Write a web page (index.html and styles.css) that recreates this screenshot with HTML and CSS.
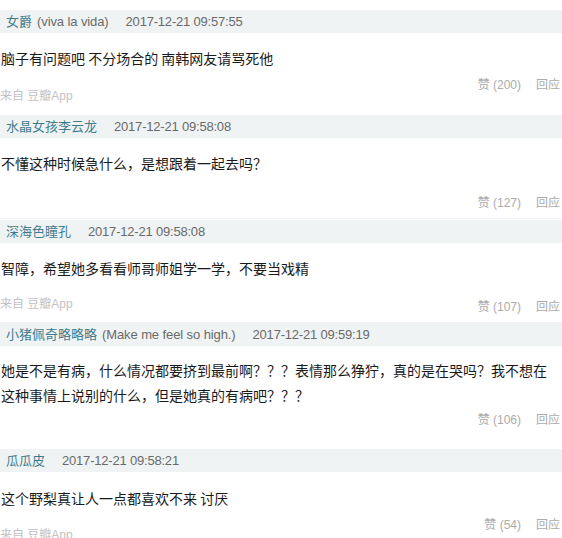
FILE: index.html
```html
<!DOCTYPE html>
<html lang="zh-CN">
<head>
<meta charset="utf-8">
<link rel="stylesheet" href="styles.css">
</head>
<body>
<div class="list">
  <div class="entry e1">
    <div class="hd"><span class="name">女爵</span><span class="alias">(viva la vida)</span><span class="date">2017-12-21 09:57:55</span></div>
    <div class="txt">脑子有问题吧 不分场合的 南韩网友请骂死他</div>
    <div class="ft"><span class="src">来自 豆瓣App</span><span class="acts">赞 (200)<span class="reply">回应</span></span></div>
  </div>
  <div class="entry e2">
    <div class="hd"><span class="name">水晶女孩李云龙</span><span class="date">2017-12-21 09:58:08</span></div>
    <div class="txt">不懂这种时候急什么，是想跟着一起去吗？</div>
    <div class="ft"><span class="acts">赞 (127)<span class="reply">回应</span></span></div>
  </div>
  <div class="entry e3">
    <div class="hd"><span class="name">深海色瞳孔</span><span class="date">2017-12-21 09:58:08</span></div>
    <div class="txt">智障，希望她多看看师哥师姐学一学，不要当戏精</div>
    <div class="ft"><span class="src">来自 豆瓣App</span><span class="acts">赞 (107)<span class="reply">回应</span></span></div>
  </div>
  <div class="entry e4">
    <div class="hd"><span class="name">小猪佩奇略略略</span><span class="alias">(Make me feel so high.)</span><span class="date">2017-12-21 09:59:19</span></div>
    <div class="txt">她是不是有病，什么情况都要挤到最前啊？？？表情那么狰狞，真的是在哭吗？我不想在这种事情上说别的什么，但是她真的有病吧？？？</div>
    <div class="ft"><span class="acts">赞 (106)<span class="reply">回应</span></span></div>
  </div>
  <div class="entry e5">
    <div class="hd"><span class="name">瓜瓜皮</span><span class="date">2017-12-21 09:58:21</span></div>
    <div class="txt">这个野梨真让人一点都喜欢不来 讨厌</div>
    <div class="ft"><span class="src">来自 豆瓣App</span><span class="acts">赞 (54)<span class="reply">回应</span></span></div>
  </div>
</div>
</body>
</html>
```

FILE: styles.css
```css
html, body {
  margin: 0;
  padding: 0;
  background: #ffffff;
}
body {
  width: 562px;
  height: 538px;
  overflow: hidden;
  font-family: "Liberation Sans", "Noto Sans CJK SC", sans-serif;
}
.list {
  display: flex;
  flex-direction: column;
}
.entry {
  display: flex;
  flex-direction: column;
}
.hd {
  height: 23px;
  line-height: 23px;
  background: #f0f3f3;
  padding-left: 6px;
  font-size: 13px;
  white-space: nowrap;
  display: flex;
}
.name {
  color: #3f7d8e;
}
.alias {
  color: #6a6a6a;
  margin-left: 5px;
  letter-spacing: -0.1px;
}
.date {
  color: #6a6a6a;
  margin-left: 17px;
  letter-spacing: -0.2px;
}
.txt {
  font-family: "Noto Sans CJK SC", sans-serif;
  font-size: 14px;
  line-height: 25px;
  color: #1a1a1a;
  padding-left: 1px;
  max-width: 550px;
  margin-top: 13px;
}
.ft {
  display: flex;
  align-items: flex-start;
  font-size: 12px;
  line-height: 16px;
  padding-right: 2px;
}
.src {
  color: #c2c2c2;
  font-family: "Liberation Sans", "Noto Sans CJK SC", sans-serif;
}
.acts {
  margin-left: auto;
  color: #ababab;
}
.reply {
  margin-left: 15px;
}

/* per-entry spacing taken from the reference */
.e1 { margin-top: 10px; }
.e1 .ft { margin-top: 6px; }
.e1 .src { margin-top: 11px; }

.e2 { margin-top: 11px; padding-bottom: 7px; border-bottom: 1px solid #f1f1f1; }
.e2 .txt { margin-top: 13px; }
.e2 .ft { margin-top: 19px; }

.e3 { margin-top: 1px; padding-bottom: 7px; border-bottom: 1px solid #f1f1f1; }
.e3 .ft { margin-top: 15px; }
.e3 .acts { margin-top: 3px; }

.e4 { margin-top: 0px; }
.e4 .txt { margin-top: 12px; }
.e4 .ft { margin-top: 4px; }

.e5 { margin-top: 21px; }
.e5 .txt { margin-top: 14px; }
.e5 .ft { margin-top: 6px; }
.e5 .src { margin-top: 10px; }
```
